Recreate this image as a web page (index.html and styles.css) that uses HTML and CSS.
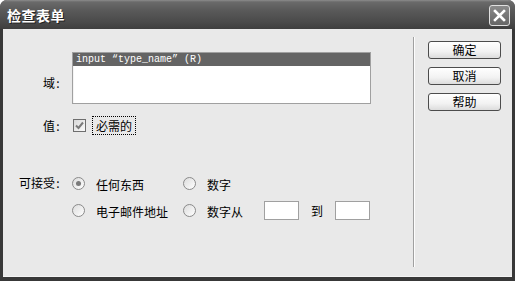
FILE: index.html
```html
<!DOCTYPE html>
<html lang="zh-CN">
  <head>
    <meta charset="UTF-8" />
    <meta name="viewport" content="width=device-width, initial-scale=1.0" />
    <title>检查表单</title>

    <link rel="stylesheet" href="styles.css">
  </head>
  <body>
    <div class="window">
      <div class="titlebar">
        <span class="title">检查表单</span>
        <button class="close">
          <svg width="13" height="13" viewBox="0 0 13 13">
            <path d="M2 2 L11 11 M11 2 L2 11" stroke="#fff" stroke-width="2.6" stroke-linecap="square" />
          </svg>
        </button>
      </div>

      <div class="content">
        <div class="form">
          <div class="label label-field">域<span class="colon">:</span></div>
          <div class="listbox">
            <div class="list-item selected">input “type_name” (R)</div>
          </div>

          <div class="label label-value">值<span class="colon">:</span></div>
          <div class="check-row">
            <span class="checkbox">
              <svg width="11" height="11" viewBox="0 0 11 11">
                <path d="M2 5.5 L4.5 8 L9 2.5" fill="none" stroke="#7a7a7a" stroke-width="2" />
              </svg>
            </span>
            <span class="focus-label">必需的</span>
          </div>

          <div class="label label-accept">可接受<span class="colon">:</span></div>
          <div class="options">
            <div class="option">
              <span class="radio checked"></span>
              <span>任何东西</span>
            </div>
            <div class="option">
              <span class="radio"></span>
              <span>数字</span>
            </div>
            <div class="option">
              <span class="radio"></span>
              <span>电子邮件地址</span>
            </div>
            <div class="option">
              <span class="radio"></span>
              <span>数字从</span>
              <span class="textbox first"></span>
              <span class="to">到</span>
              <span class="textbox"></span>
            </div>
          </div>
        </div>

        <div class="separator"></div>

        <div class="buttons">
          <button class="btn">确定</button>
          <button class="btn">取消</button>
          <button class="btn">帮助</button>
        </div>
      </div>
    </div>
  </body>
</html>
```

FILE: styles.css
```css
body {
  margin: 0;
  background: #fff;
  font-family: "Noto Sans CJK SC", "Liberation Sans", sans-serif;
  font-size: 12px;
  color: #000;
}

.window {
  width: 515px;
  height: 281px;
  display: flex;
  flex-direction: column;
  background: #383838;
  border-radius: 7px 7px 0 0;
  overflow: hidden;
}

.titlebar {
  height: 29px;
  flex-shrink: 0;
  display: flex;
  align-items: center;
  justify-content: space-between;
  padding: 0 5px 0 7px;
  background: linear-gradient(
    to bottom,
    #8c8c8c 0,
    #6a6a6a 2px,
    #5a5a5a 10px,
    #4a4a4a 22px,
    #3e3e3e 100%
  );
}

.title {
  color: #fff;
  font-size: 14px;
  font-weight: bold;
  letter-spacing: 0.5px;
  text-shadow: 1px 1px 0 #222;
  margin-top: 1px;
}

.close {
  width: 21px;
  height: 21px;
  padding: 0;
  margin-top: 1px;
  border: 1px solid #e0e0e0;
  border-radius: 3px;
  background: linear-gradient(to bottom, #8a8a8a, #666);
  display: flex;
  align-items: center;
  justify-content: center;
}

.content {
  flex: 1;
  margin: 0 3px 4px;
  background: #e9e9e9;
  display: flex;
  border-bottom: 1px solid #f4f4f4;
}

.form {
  width: 410px;
  padding-top: 23px;
  display: grid;
  grid-template-columns: 61px 1fr;
  grid-template-rows: auto auto auto;
  column-gap: 8px;
  align-content: start;
}

.label {
  text-align: right;
  line-height: 16px;
  padding-right: 3px;
}

.colon {
  display: inline-block;
  width: 6px;
  text-align: center;
}

.label-field {
  align-self: center;
  margin-top: 9px;
}

.label-value {
  margin-top: 14px;
}

.label-accept {
  margin-top: 40px;
}

.listbox {
  width: 297px;
  height: 50px;
  border: 1px solid #a0a0a0;
  box-shadow: inset 1px 1px 0 #f4f4f4;
  background: #fff;
}

.list-item {
  font-family: "Liberation Mono", monospace;
  font-size: 10px;
  line-height: 13px;
  height: 13px;
  padding-left: 3px;
}

.list-item.selected {
  background: #646464;
  color: #fff;
}

.check-row {
  margin-top: 12px;
  height: 19px;
  display: flex;
  align-items: center;
  gap: 6px;
}

.checkbox {
  width: 11px;
  height: 11px;
  margin-left: 1px;
  border: 1px solid #6e6e6e;
  background: linear-gradient(to bottom right, #d8d8d8, #fafafa);
  display: flex;
  align-items: center;
  justify-content: center;
}

.focus-label {
  border: 1px dotted #000;
  padding: 0 3px;
  line-height: 17px;
}

.options {
  margin-top: 38px;
  display: grid;
  grid-template-columns: 111px auto;
  row-gap: 7px;
}

.option {
  height: 20px;
  display: flex;
  align-items: center;
}

.radio {
  width: 11px;
  height: 11px;
  border: 1px solid #8a8a8a;
  border-radius: 50%;
  background: linear-gradient(to bottom right, #dcdcdc, #fff);
  margin-right: 11px;
  position: relative;
}

.radio.checked::after {
  content: "";
  position: absolute;
  left: 3px;
  top: 3px;
  width: 5px;
  height: 5px;
  border-radius: 50%;
  background: #7a7a7a;
}

.option .radio + span {
  margin-top: 2px;
}

.textbox {
  width: 33px;
  height: 17px;
  border: 1px solid #a0a0a0;
  background: #fff;
}

.textbox.first {
  margin-left: 21px;
}

.to {
  margin: 0 12px;
}

.separator {
  width: 1px;
  margin: 8px 0 9px;
  background: #a0a0a0;
  border-right: 1px solid #fdfdfd;
}

.buttons {
  padding: 12px 0 0 13px;
  display: flex;
  flex-direction: column;
  gap: 8px;
}

.btn {
  width: 73px;
  height: 18px;
  padding: 0;
  border: 1px solid #4c4c4c;
  border-radius: 3px;
  background: linear-gradient(to bottom, #fff, #f2f2f2 60%, #dcdcdc);
  font-family: "Noto Sans CJK SC", "Liberation Sans", sans-serif;
  font-size: 12px;
  line-height: 16px;
  color: #000;
}
```
